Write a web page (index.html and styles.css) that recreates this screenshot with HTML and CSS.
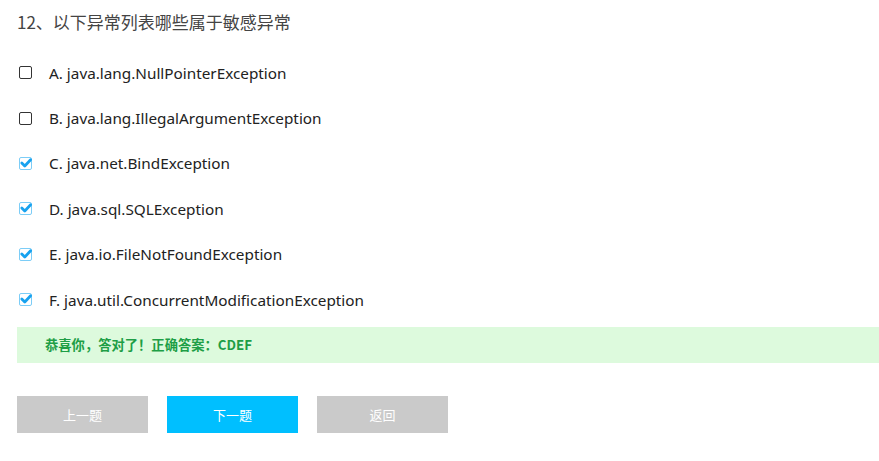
FILE: index.html
```html
<!DOCTYPE html>
<html lang="zh">
<head>
<meta charset="utf-8">
<link rel="stylesheet" href="styles.css">
</head>
<body>
<div class="quiz">
  <div class="title">12、以下异常列表哪些属于敏感异常</div>
  <ul class="options">
    <li class="opt"><span class="box"></span><span class="label">A. java.lang.NullPointerException</span></li>
    <li class="opt"><span class="box"></span><span class="label">B. java.lang.IllegalArgumentException</span></li>
    <li class="opt"><span class="box checked"><svg viewBox="0 0 14 14" width="14" height="14"><path d="M2.8 7 L5.8 10 L11.6 3.8" fill="none" stroke="#18a2ef" stroke-width="2.8" stroke-linecap="round" stroke-linejoin="round"/></svg></span><span class="label">C. java.net.BindException</span></li>
    <li class="opt"><span class="box checked"><svg viewBox="0 0 14 14" width="14" height="14"><path d="M2.8 7 L5.8 10 L11.6 3.8" fill="none" stroke="#18a2ef" stroke-width="2.8" stroke-linecap="round" stroke-linejoin="round"/></svg></span><span class="label">D. java.sql.SQLException</span></li>
    <li class="opt"><span class="box checked"><svg viewBox="0 0 14 14" width="14" height="14"><path d="M2.8 7 L5.8 10 L11.6 3.8" fill="none" stroke="#18a2ef" stroke-width="2.8" stroke-linecap="round" stroke-linejoin="round"/></svg></span><span class="label">E. java.io.FileNotFoundException</span></li>
    <li class="opt"><span class="box checked"><svg viewBox="0 0 14 14" width="14" height="14"><path d="M2.8 7 L5.8 10 L11.6 3.8" fill="none" stroke="#18a2ef" stroke-width="2.8" stroke-linecap="round" stroke-linejoin="round"/></svg></span><span class="label">F. java.util.ConcurrentModificationException</span></li>
  </ul>
  <div class="result">恭喜你，答对了！正确答案：CDEF</div>
  <div class="buttons">
    <button class="btn gray">上一题</button>
    <button class="btn blue">下一题</button>
    <button class="btn gray">返回</button>
  </div>
</div>
</body>
</html>
```
FILE: styles.css
```css
html, body {
  margin: 0;
  padding: 0;
  background: #fff;
}
body {
  font-family: "Noto Sans", "Noto Sans CJK SC", sans-serif;
  color: #333;
}
.quiz {
  padding: 10px 0 0 17px;
}
.title {
  font-family: "Noto Sans CJK SC", sans-serif;
  font-size: 17px;
  line-height: 24px;
  height: 24px;
  color: #444;
}
.options {
  list-style: none;
  margin: 16px 0 0;
  padding: 0;
}
.opt {
  display: flex;
  align-items: center;
  height: 45.4px;
}
.box {
  width: 11px;
  height: 11px;
  border: 1px solid #333;
  border-radius: 2px;
  margin-left: 2px;
  margin-right: 17px;
  display: flex;
  align-items: center;
  justify-content: center;
  position: relative;
}
.box.checked {
  border-color: #7ccdf7;
}
.box svg {
  display: block;
  position: absolute;
  left: -1px;
  top: -2px;
}
.label {
  font-size: 15.3px;
  color: #222;
}
.result {
  margin-top: 5px;
  height: 36px;
  line-height: 36px;
  background: #ddfadd;
  color: #1e9e46;
  font-weight: bold;
  font-size: 13.3px;
  padding-left: 28px;
  font-family: "Noto Sans CJK SC", sans-serif;
}
.buttons {
  display: flex;
  gap: 19px;
  margin-top: 33px;
}
.btn {
  width: 131px;
  height: 37px;
  border: none;
  color: #fff;
  font-size: 13px;
  font-family: "Noto Sans CJK SC", sans-serif;
  padding: 0;
}
.gray { background: #cacaca; }
.blue { background: #00bfff; }
```
